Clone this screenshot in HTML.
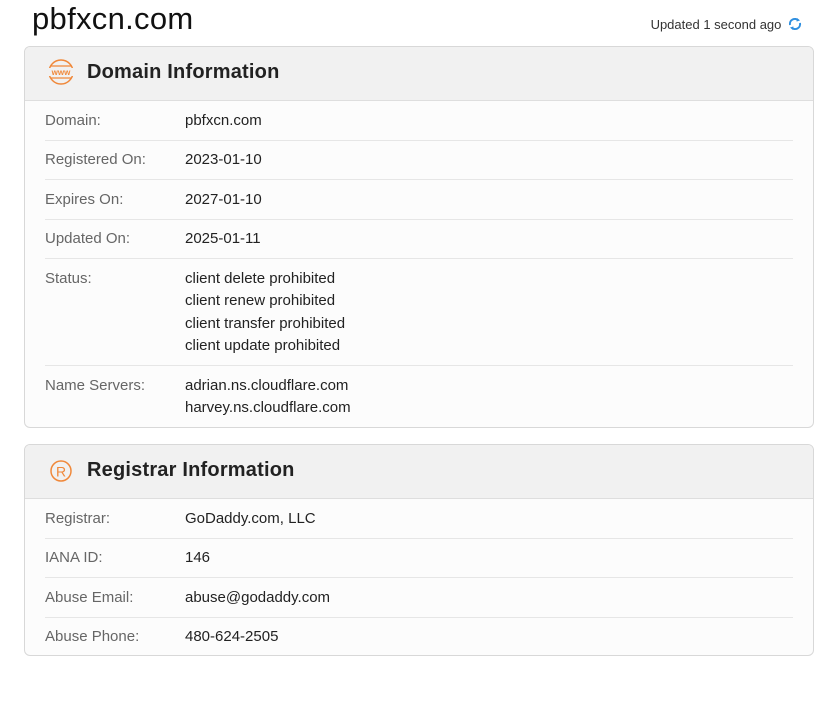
<!DOCTYPE html>
<html><head><meta charset="utf-8"><style>
*{margin:0;padding:0;box-sizing:border-box}
body{width:821px;height:701px;background:#fff;font-family:"Liberation Sans",sans-serif;color:#222;position:relative;overflow:hidden}
h1{position:absolute;left:32px;top:1px;font-size:31px;font-weight:normal;color:#111;letter-spacing:0.3px}
.upd{position:absolute;right:18px;top:16px;font-size:13px;color:#333}
.card{position:absolute;left:24px;width:790px;border:1px solid #d8d8d8;border-radius:6px;background:#fcfcfc;overflow:hidden}
.hd{height:54px;background:#f1f1f1;border-bottom:1px solid #dedede;position:relative}
.hd span{position:absolute;left:62px;top:14px;font-size:20px;color:#222;font-weight:bold;letter-spacing:0.2px}
.hd svg{position:absolute;left:21px;top:12px}
.rows{padding:0 20px}
.row{display:flex;border-bottom:1px solid #e6e6e6;font-size:15px;line-height:22.5px;padding:8.5px 0 7.5px 0}
.row:last-child{border-bottom:none}
.l{width:140px;color:#666}
.v{color:#222}
</style></head><body>
<h1>pbfxcn.com</h1>
<div class="upd">Updated 1 second ago <svg width="16" height="16" viewBox="0 0 16 16" style="vertical-align:-3px;margin-left:2px"><path d="M3 9a5 5 0 0 1 8.5-4.5" stroke="#2f8fe0" stroke-width="2" fill="none"/><path d="M13 7a5 5 0 0 1-8.5 4.5" stroke="#2f8fe0" stroke-width="2" fill="none"/><path d="M10 2l3 2.5-3.5 1z" fill="#2f8fe0"/><path d="M6 14l-3-2.5 3.5-1z" fill="#2f8fe0"/></svg></div>
<div class="card" style="top:46px;height:382px">
<div class="hd"><svg width="30" height="26" viewBox="0 0 30 26"><circle cx="15" cy="13" r="12" fill="none" stroke="#f0883a" stroke-width="1.5"/><path d="M5 7h20M5 19h20" stroke="#f0883a" stroke-width="1.2"/><rect x="2" y="9" width="26" height="8" fill="#f1f1f1"/><text x="15" y="16" font-size="8" text-anchor="middle" fill="#f0883a" font-family="Liberation Sans" font-weight="bold">www</text></svg><span>Domain Information</span></div>
<div class="rows">
<div class="row"><div class="l">Domain:</div><div class="v">pbfxcn.com</div></div>
<div class="row"><div class="l">Registered On:</div><div class="v">2023-01-10</div></div>
<div class="row"><div class="l">Expires On:</div><div class="v">2027-01-10</div></div>
<div class="row"><div class="l">Updated On:</div><div class="v">2025-01-11</div></div>
<div class="row"><div class="l">Status:</div><div class="v">client delete prohibited<br>client renew prohibited<br>client transfer prohibited<br>client update prohibited</div></div>
<div class="row"><div class="l">Name Servers:</div><div class="v">adrian.ns.cloudflare.com<br>harvey.ns.cloudflare.com</div></div>
</div></div>
<div class="card" style="top:444px;height:212px">
<div class="hd"><svg width="30" height="28" viewBox="0 0 30 28"><circle cx="15" cy="14" r="10" fill="none" stroke="#f0883a" stroke-width="1.5"/><text x="15" y="19.5" font-size="14" text-anchor="middle" fill="#f0883a" font-family="Liberation Sans">R</text></svg><span>Registrar Information</span></div>
<div class="rows">
<div class="row"><div class="l">Registrar:</div><div class="v">GoDaddy.com, LLC</div></div>
<div class="row"><div class="l">IANA ID:</div><div class="v">146</div></div>
<div class="row"><div class="l">Abuse Email:</div><div class="v">abuse@godaddy.com</div></div>
<div class="row"><div class="l">Abuse Phone:</div><div class="v">480-624-2505</div></div>
</div></div>
</body></html>
